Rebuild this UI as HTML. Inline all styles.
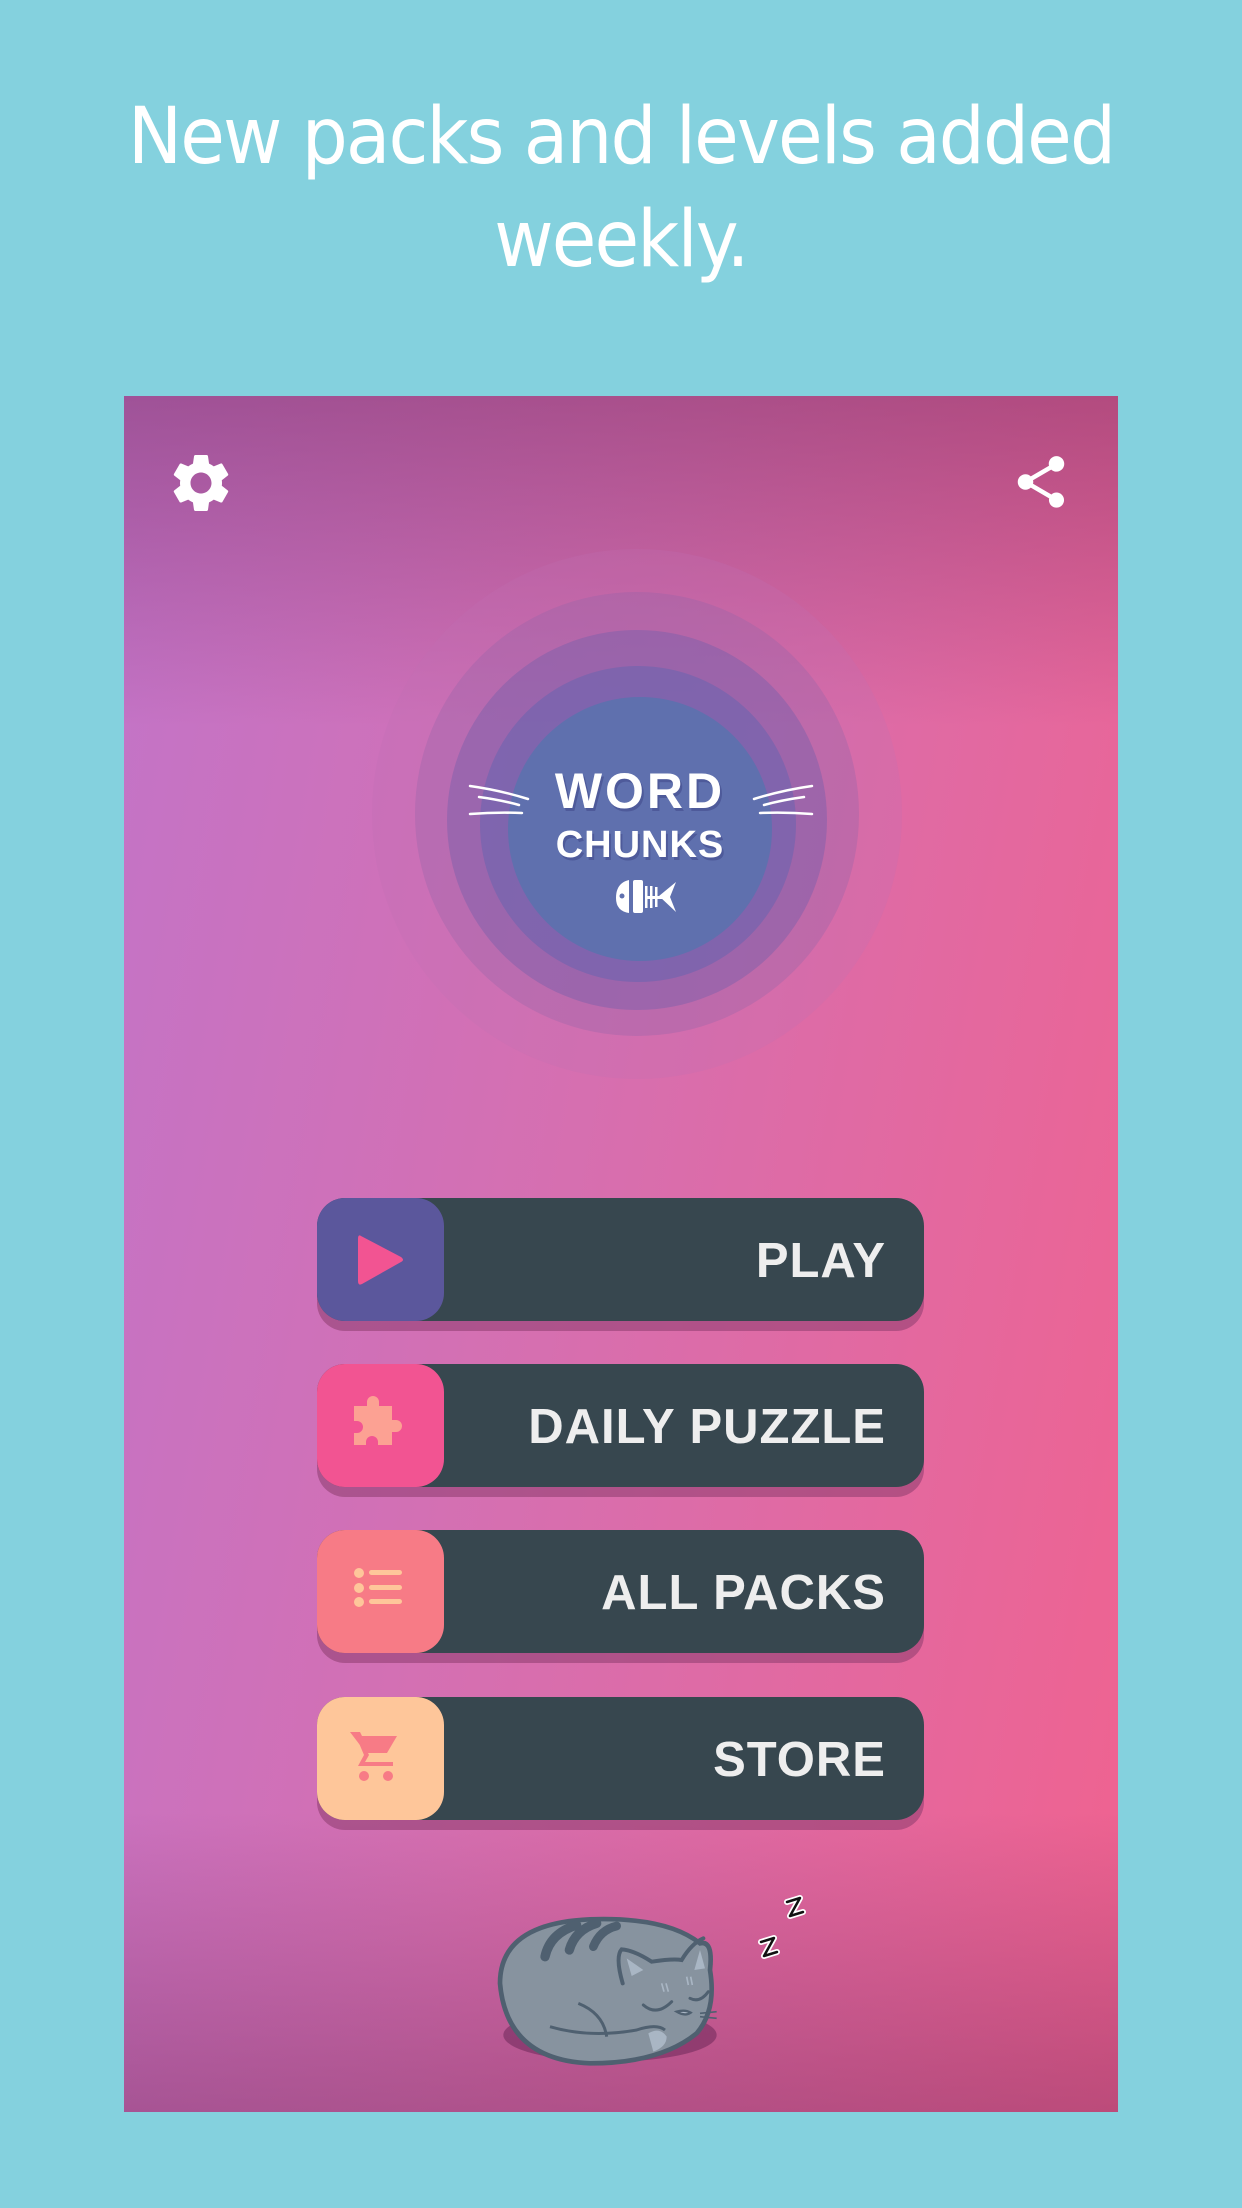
<!DOCTYPE html>
<html><head><meta charset="utf-8"><style>
html,body{margin:0;padding:0}
body{width:1242px;height:2208px;background:#84d1de;position:relative;overflow:hidden;font-family:"Liberation Sans",sans-serif}
.head{position:absolute;left:0;width:1242px;top:86px;text-align:center;color:#fff;font-family:"DejaVu Sans","Liberation Sans",sans-serif;font-size:78px;line-height:103px;letter-spacing:-2px;transform:scaleX(.93);transform-origin:621px 0}
.phone{position:absolute;left:124px;top:396px;width:994px;height:1716px;overflow:hidden;
background:linear-gradient(100deg,#c274c8 0%,#d66fb0 45%,#f0628f 100%)}
.top{position:absolute;left:0;top:0;width:100%;height:330px;background:linear-gradient(180deg,rgba(110,35,85,.42),rgba(120,40,90,0))}
.bot{position:absolute;left:0;bottom:0;width:100%;height:300px;background:linear-gradient(0deg,rgba(110,40,90,.4),rgba(110,40,90,0))}
.btn{position:absolute;left:193px;width:607px;height:123px}
.btn .sh{position:absolute;left:0;top:10px;width:100%;height:123px;border-radius:28px;background:rgba(140,60,110,.55)}
.btn .bar{position:absolute;left:0;top:0;width:100%;height:123px;border-radius:28px;background:#37474f}
.btn .ic{position:absolute;left:0;top:0;width:127px;height:123px;border-radius:28px}
.btn .t{position:absolute;right:38px;top:2px;line-height:123px;color:#eeeeee;font-weight:bold;font-size:49px;letter-spacing:1px}
</style></head><body>
<div class="head">New packs and levels added<br>weekly.</div>
<div class="phone">
<div class="top"></div><div class="bot"></div>
<svg style="position:absolute;left:42px;top:52px" width="70" height="70" viewBox="0 0 24 24"><path fill="#fff" d="M19.14 12.94c.04-.3.06-.61.06-.94 0-.32-.02-.64-.07-.94l2.03-1.58a.49.49 0 0 0 .12-.61l-1.920-3.32a.488.488 0 0 0-.59-.22l-2.39.96c-.5-.38-1.03-.7-1.62-.94l-.36-2.540a.484.484 0 0 0-.48-.41h-3.84c-.24 0-.43.17-.47.41l-.36 2.54c-.59.24-1.13.57-1.62.94l-2.39-.96c-.22-.08-.47 0-.59.22L2.74 8.87c-.12.21-.08.47.12.61l2.03 1.58c-.05.3-.09.63-.09.94s.02.64.07.94l-2.03 1.58a.49.49 0 0 0-.12.61l1.92 3.32c.12.22.37.29.59.22l2.39-.96c.5.38 1.03.7 1.62.94l.36 2.54c.05.24.24.41.48.41h3.84c.24 0 .44-.17.47-.41l.36-2.54c.59-.24 1.13-.56 1.62-.94l2.39.96c.22.08.47 0 .59-.22l1.92-3.32c.12-.22.07-.47-.12-.61l-2.01-1.58zM12 15.6c-1.98 0-3.6-1.620-3.6-3.6s1.62-3.6 3.6-3.6 3.6 1.62 3.6 3.6-1.62 3.6-3.6 3.6z"/></svg>
<svg style="position:absolute;left:886px;top:54px" width="62" height="64" viewBox="0 0 24 24"><path fill="#fff" d="M18 16.08c-.76 0-1.44.3-1.96.77L8.91 12.7c.05-.23.09-.46.09-.7s-.04-.47-.09-.7l7.05-4.11c.54.5 1.25.81 2.04.81 1.66 0 3-1.34 3-3s-1.34-3-3-3-3 1.34-3 3c0 .24.04.47.09.7L8.04 9.810C7.5 9.31 6.79 9 6 9c-1.66 0-3 1.34-3 3s1.34 3 3 3c.79 0 1.5-.31 2.04-.81l7.12 4.16c-.05.21-.08.43-.08.65 0 1.61 1.31 2.92 2.92 2.92s2.920-1.31 2.92-2.92-1.31-2.92-2.92-2.92z"/></svg>
<svg style="position:absolute;left:0;top:0" width="994" height="900">
<circle cx="513" cy="418" r="265" fill="rgba(190,110,180,.25)"/>
<circle cx="513" cy="418" r="222" fill="rgba(150,100,170,.35)"/>
<circle cx="513" cy="424" r="190" fill="rgba(120,95,170,.45)"/>
<circle cx="514" cy="428" r="158" fill="rgba(100,100,175,.5)"/>
<circle cx="516" cy="433" r="132" fill="#5f70ae"/>
<g stroke="#fff" stroke-width="2.5" fill="none" stroke-linecap="round">
<path d="M346 390 Q375 394 404 403"/><path d="M355 401 Q377 404 395 409"/><path d="M346 418 Q372 416 398 417"/>
<path d="M688 390 Q659 394 630 403"/><path d="M680 401 Q658 404 640 409"/><path d="M688 418 Q662 416 636 417"/>
</g>
<text x="518" y="415" text-anchor="middle" font-family="Liberation Sans,sans-serif" font-weight="bold" font-size="50" fill="#4e5a9a" letter-spacing="3">WORD</text>
<text x="516" y="412" text-anchor="middle" font-family="Liberation Sans,sans-serif" font-weight="bold" font-size="50" fill="#fff" letter-spacing="3">WORD</text>
<text x="518" y="464" text-anchor="middle" font-family="Liberation Sans,sans-serif" font-weight="bold" font-size="38" fill="#4e5a9a" letter-spacing="1">CHUNKS</text>
<text x="516" y="461" text-anchor="middle" font-family="Liberation Sans,sans-serif" font-weight="bold" font-size="38" fill="#fff" letter-spacing="1">CHUNKS</text>
<g fill="#fff">
<path d="M492 502 Q492 487 505 484 L505 517 Q492 515 492 502Z"/>
<rect x="509" y="484" width="10" height="33" rx="2"/>
<rect x="521" y="490" width="2.5" height="22"/><rect x="526" y="490" width="2.5" height="22"/><rect x="531" y="491" width="2.5" height="20"/>
<path d="M521 500 L543 500 L543 503 L521 503Z"/>
<path d="M535 500 L552 486 L546 501 L552 516Z"/>
</g>
<circle cx="498" cy="500" r="2.5" fill="#5f70ae"/>
</svg>
<div class="btn" style="top:802px"><div class="sh"></div><div class="bar"></div><div class="ic" style="background:#5b579c"></div>
<svg style="position:absolute;left:38px;top:34px" width="52" height="56" viewBox="0 0 52 56"><path d="M6 4 Q3 2 3 7 L3 49 Q3 54 7 52 L46 30 Q50 28 46 25Z" fill="#f25492"/></svg>
<div class="t">PLAY</div></div>
<div class="btn" style="top:968px"><div class="sh"></div><div class="bar"></div><div class="ic" style="background:#f25492"></div>
<svg style="position:absolute;left:34px;top:32px" width="56" height="58" viewBox="0 0 56 58"><path fill="#fca193" d="M3 10 H16 V6 a6 6 0 0 1 12 0 V10 H41 V24 H45 a6 6 0 0 1 0 12 H41 V49 H27 V46 a6 6 0 0 0 -12 0 V49 H3 V37 H6 a6 6 0 0 0 0 -12 H3Z"/></svg>
<div class="t">DAILY PUZZLE</div></div>
<div class="btn" style="top:1134px"><div class="sh"></div><div class="bar"></div><div class="ic" style="background:#f77b86"></div>
<svg style="position:absolute;left:34px;top:34px" width="60" height="56" viewBox="0 0 60 56"><g fill="#fec69a"><circle cx="8" cy="9" r="5"/><circle cx="8" cy="24" r="5"/><circle cx="8" cy="38" r="5"/><rect x="18" y="6" width="33" height="5" rx="2.5"/><rect x="18" y="21" width="33" height="5" rx="2.5"/><rect x="18" y="35" width="33" height="5" rx="2.5"/></g></svg>
<div class="t">ALL PACKS</div></div>
<div class="btn" style="top:1301px"><div class="sh"></div><div class="bar"></div><div class="ic" style="background:#fec69a"></div>
<svg style="position:absolute;left:30px;top:32px" width="60" height="60" viewBox="0 0 60 60"><g fill="#f77b86"><path d="M3 3 H13 L15 7 H50 L40 24 H19Z"/><path d="M13 7 L22 26 L18 33 H46 V37 H11 L17 26 L9 7Z"/><circle cx="17" cy="47" r="5"/><circle cx="41" cy="47" r="5"/></g></svg>
<div class="t">STORE</div></div>
</div>
<svg style="position:absolute;left:480px;top:1870px" width="350" height="200" viewBox="0 0 1050 600">
<ellipse cx="390" cy="495" rx="320" ry="80" fill="rgba(110,40,90,.55)"/>
<path d="M60 340 Q60 160 330 148 Q560 140 660 220 Q700 210 690 300 Q710 420 650 490 Q540 580 330 580 Q80 570 60 340Z" fill="#87939f" stroke="#4f6070" stroke-width="14"/>
<path d="M195 260 Q210 190 290 165" stroke="#4f6070" stroke-width="28" fill="none" stroke-linecap="round"/>
<path d="M268 240 Q285 180 350 160" stroke="#4f6070" stroke-width="28" fill="none" stroke-linecap="round"/>
<path d="M340 230 Q360 180 410 168" stroke="#4f6070" stroke-width="26" fill="none" stroke-linecap="round"/>
<path d="M428 340 Q405 260 425 238 Q460 240 515 275 Q580 265 605 270 Q635 220 670 205" stroke="#4f6070" stroke-width="12" fill="none" stroke-linecap="round"/>
<path d="M440 265 L455 318 L490 300Z" fill="#a9b6c4"/><path d="M643 300 L660 240 L675 295Z" fill="#a9b6c4"/>
<path d="M490 405 Q530 440 575 395" stroke="#4f6070" stroke-width="9" fill="none" stroke-linecap="round"/>
<path d="M630 385 Q660 400 685 365" stroke="#4f6070" stroke-width="9" fill="none" stroke-linecap="round"/>
<path d="M590 425 Q615 418 632 428 Q615 440 590 425Z" fill="#a9b6c4" stroke="#4f6070" stroke-width="7"/>
<path d="M295 400 Q370 430 380 500" stroke="#4f6070" stroke-width="9" fill="none"/>
<path d="M210 470 Q330 505 470 480 Q530 460 555 480" stroke="#4f6070" stroke-width="9" fill="none"/>
<path d="M505 490 Q540 470 560 500 Q560 530 520 545Z" fill="#a9b6c4"/>
<path d="M545 340 L552 365 M558 340 L565 365 M620 320 L625 345 M632 320 L637 345" stroke="#a9b6c4" stroke-width="5"/>
<path d="M660 430 L710 425 M660 440 L710 445" stroke="#4f6070" stroke-width="5"/>
</svg>
<svg style="position:absolute;left:750px;top:1890px" width="70" height="80" viewBox="0 0 70 80" fill="none" stroke-linecap="round" stroke-linejoin="round">
<path d="M37 12 L50 8 L40 26 L53 22" stroke="#fff" stroke-width="6"/><path d="M37 12 L50 8 L40 26 L53 22" stroke="#111" stroke-width="2.5"/>
<path d="M11 52 L24 48 L14 66 L27 62" stroke="#fff" stroke-width="6"/><path d="M11 52 L24 48 L14 66 L27 62" stroke="#111" stroke-width="2.5"/>
</svg>
</body></html>
